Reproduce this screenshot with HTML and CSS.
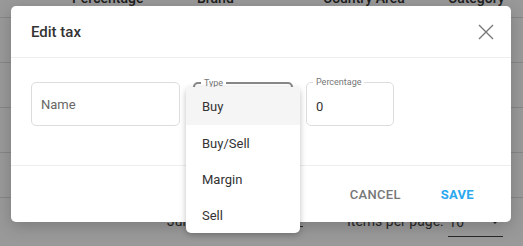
FILE: index.html
```html
<!DOCTYPE html>
<html lang="en">

<head>
    <meta charset="UTF-8">
    <title>Edit tax</title>
    <link rel="stylesheet" href="styles.css">
</head>

<body>
    <div class="page">
        <div class="table-head">
            <span class="col-pct">Percentage</span>
            <span class="col-brand">Brand</span>
            <span class="col-area">Country Area</span>
            <span class="col-cat">Category</span>
        </div>
        <div class="table-row"></div>
        <div class="table-row"></div>
        <div class="table-row"></div>
        <div class="table-row"></div>
        <div class="pager">
            <span class="pager-jump">Jump to page:</span>
            <span class="pager-input"></span>
            <span class="pager-label">Items per page:</span>
            <span class="pager-select">10<i class="caret"></i></span>
        </div>
    </div>

    <div class="overlay">
        <div class="modal">
            <div class="modal-header">
                <span class="modal-title">Edit tax</span>
                <svg class="close-icon" width="16" height="16" viewBox="0 0 16 16">
                    <path d="M1 1 L15 15 M15 1 L1 15" stroke="#777" stroke-width="1.4" fill="none" />
                </svg>
            </div>
            <div class="modal-body">
                <div class="field field-name">
                    <span class="placeholder">Name</span>
                </div>
                <div class="field field-type">
                    <span class="field-label">Type</span>
                    <ul class="menu">
                        <li class="menu-item active">Buy</li>
                        <li class="menu-item">Buy/Sell</li>
                        <li class="menu-item">Margin</li>
                        <li class="menu-item">Sell</li>
                    </ul>
                </div>
                <div class="field field-pct">
                    <span class="field-label">Percentage</span>
                    <span class="value">0</span>
                </div>
            </div>
            <div class="modal-footer">
                <button class="btn btn-cancel">Cancel</button>
                <button class="btn btn-save">Save</button>
            </div>
        </div>
    </div>
</body>

</html>
```

FILE: styles.css
```css
html,
body {
    margin: 0;
    padding: 0;
    height: 100%;
}

body {
    font-family: Roboto, 'Liberation Sans', sans-serif;
    background: #fff;
    overflow: hidden;
    position: relative;
}

/* page behind the dialog */
.page {
    width: 523px;
    height: 246px;
    display: flex;
    flex-direction: column;
}

.table-head {
    height: 17px;
    border-bottom: 1px solid #e0e0e0;
    display: flex;
    align-items: flex-end;
    font-size: 14px;
    font-weight: 500;
    color: #333;
    line-height: 1;
    margin-top: -6px;
    padding-top: 6px;
    box-sizing: content-box;
}

.col-pct {
    margin-left: 72px;
    width: 125px;
}

.col-brand {
    width: 126px;
}

.col-area {
    width: 125px;
}

.table-head span {
    transform: translateY(-12px);
}

.table-row {
    height: 44px;
    border-bottom: 1px solid #e0e0e0;
}

.pager {
    display: flex;
    align-items: center;
    height: 46px;
    font-size: 14px;
    color: #444;
    padding-left: 167px;
}

.pager-jump {
    width: 60px;
    overflow: hidden;
    white-space: nowrap;
}

.pager-input {
    width: 48px;
    border-bottom: 1px solid #444;
    margin: 10px 0 0 28px;
}

.pager-label {
    margin-left: 44px;
}

.pager-select {
    display: flex;
    justify-content: space-between;
    align-items: center;
    width: 55px;
    margin-left: 5px;
    padding: 0 0 6px 0;
    border-bottom: 1px solid #444;
    transform: translateY(4px);
}

.caret {
    border-left: 5px solid transparent;
    border-right: 5px solid transparent;
    border-top: 5px solid #444;
    margin-right: 3px;
}

/* dialog */
.overlay {
    position: absolute;
    inset: 0;
    background: rgba(0, 0, 0, 0.4);
    display: flex;
    justify-content: flex-start;
    align-items: flex-start;
    padding-left: 11px;
}

.modal {
    width: 500px;
    margin-top: 6px;
    background: #fff;
    border-radius: 5px;
    box-shadow: 0 4px 16px rgba(0, 0, 0, 0.2);
}

.modal-header {
    height: 52px;
    padding: 0 20px;
    display: flex;
    align-items: center;
    justify-content: space-between;
    border-bottom: 1px solid #eee;
    box-sizing: border-box;
}

.modal-title {
    font-size: 15px;
    font-weight: 500;
    color: #333;
}

.close-icon {
    margin-right: -3px;
}

.modal-body {
    display: flex;
    gap: 13px;
    padding: 24px 20px 39px 20px;
    border-bottom: 1px solid #eee;
}

.field {
    position: relative;
    height: 44px;
    border: 1px solid #ddd;
    border-radius: 5px;
    box-sizing: border-box;
    display: flex;
    align-items: center;
    padding: 0 9px;
    font-size: 13px;
    color: #333;
}

.field-name {
    width: 149px;
}

.field-type {
    width: 100px;
    border-color: #888;
    border-width: 2px;
}

.field-pct {
    width: 88px;
    padding-top: 4px;
}

.placeholder {
    color: #666;
}

.field-label {
    position: absolute;
    top: -6px;
    left: 6px;
    padding: 0 3px;
    background: #fff;
    font-size: 9px;
    color: #777;
    line-height: 10px;
}

.menu {
    position: absolute;
    top: 3px;
    left: -9px;
    width: 114px;
    margin: 0;
    padding: 0;
    list-style: none;
    background: #fff;
    border-radius: 5px;
    box-shadow: 0 2px 6px rgba(0, 0, 0, 0.25);
    overflow: hidden;
    z-index: 2;
}

.menu-item {
    height: 36px;
    display: flex;
    align-items: center;
    padding-left: 16px;
    font-size: 13px;
    color: #333;
}

.menu-item.active {
    background: #f5f5f5;
    height: 38px;
}

.modal-footer {
    height: 56px;
    display: flex;
    align-items: center;
    justify-content: flex-end;
    padding-right: 21px;
    gap: 8px;
}

.btn {
    font-family: inherit;
    font-size: 13px;
    font-weight: 500;
    text-transform: uppercase;
    letter-spacing: 0.3px;
    background: none;
    border: none;
    padding: 8px 16px;
    cursor: pointer;
}

.btn-cancel {
    color: #777;
}

.btn-save {
    color: #29a8f0;
    font-weight: 700;
}
```
